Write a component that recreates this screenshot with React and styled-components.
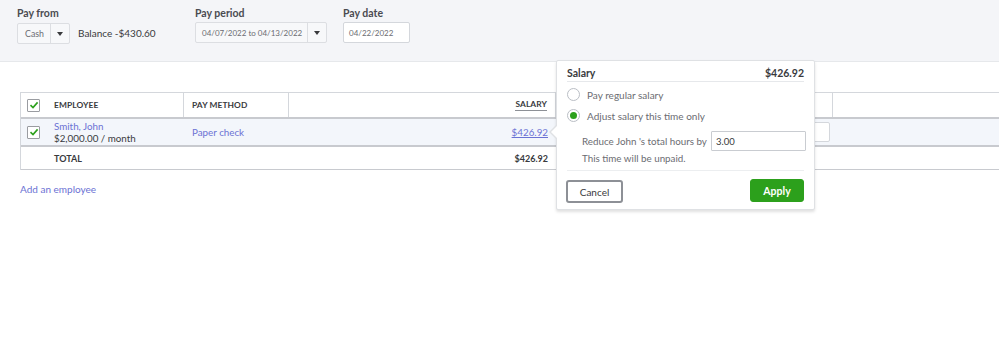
import React from "react";
import styled, { createGlobalStyle } from "styled-components";

const Global = createGlobalStyle`
  html, body { margin: 0; padding: 0; background: #fff; }
  body { font-family: Lato, "Open Sans", Arial, sans-serif; color: #393a3d; }
  * { box-sizing: border-box; }
`;

const LINK = "#6b72d4";
const GREEN = "#2ca01c";
const LINE = "#d4d7dc";

const Page = styled.div`
  position: relative;
  width: 999px;
  height: 342px;
  overflow: hidden;
  white-space: nowrap;
`;

const TopBand = styled.div`
  height: 62px;
  background: #f4f5f8;
  border-bottom: 1px solid #e6e8eb;
  padding: 6px 0 0 17px;
  display: flex;
`;

const Field = styled.div`
  width: ${(p) => p.$width}px;
  display: flex;
  flex-direction: column;
`;

const Label = styled.div`
  font-size: 10.5px;
  font-weight: 700;
  line-height: 14px;
  height: 14px;
  color: #4a4b50;
  margin-bottom: 2px;
`;

const ControlRow = styled.div`
  display: flex;
  align-items: center;
  gap: 8px;
`;

const Select = styled.div`
  width: ${(p) => p.$width}px;
  height: 21px;
  margin-top: ${(p) => p.$offset || 0}px;
  border: 1px solid #dcdee2;
  border-radius: 2px;
  background: #f7f8fa;
  display: flex;
  align-items: stretch;
`;

const SelectText = styled.div`
  flex: 1;
  font-size: ${(p) => p.$fs}px;
  color: #6b6c72;
  display: flex;
  align-items: center;
  padding-left: ${(p) => p.$pad}px;
  border-right: 1px solid #dcdee2;
  overflow: hidden;
`;

const Caret = styled.div`
  width: 18px;
  flex-shrink: 0;
  display: flex;
  align-items: center;
  justify-content: center;
  &::after {
    content: "";
    border-left: 3px solid transparent;
    border-right: 3px solid transparent;
    border-top: 4px solid #393a3d;
  }
`;

const Balance = styled.div`
  font-size: 10px;
  color: #393a3d;
`;

const DateInput = styled.div`
  width: 67px;
  height: 21px;
  background: #fff;
  border: 1px solid #d4d7dc;
  border-radius: 2px;
  font-size: 8px;
  color: #6b6c72;
  display: flex;
  align-items: center;
  padding-left: 5px;
`;

const Table = styled.div`
  margin: 30px 0 0 20px;
  border-left: 1px solid ${LINE};
  border-top: 1px solid ${LINE};
`;

const COLS = "25px 138px 105px 267px 277px 1fr";

const HeadRow = styled.div`
  display: grid;
  grid-template-columns: ${COLS};
  height: 26px;
  border-bottom: 2px solid #c8cacf;
`;

const BodyRow = styled.div`
  display: grid;
  grid-template-columns: ${COLS};
  height: ${(p) => p.$h}px;
  background: ${(p) => (p.$shade ? "#f3f6fb" : "#fff")};
  border-bottom: ${(p) => p.$bw}px solid #c8cacf;
`;

const Cell = styled.div`
  display: flex;
  flex-direction: column;
  justify-content: center;
  align-items: ${(p) => (p.$right ? "flex-end" : "flex-start")};
  padding: ${(p) => (p.$right ? `0 ${p.$pr ?? 8}px 0 0` : "0 0 0 8px")};
  border-right: ${(p) => (p.$div ? `1px solid ${LINE}` : "none")};
`;

const CheckCell = styled.div`
  display: flex;
  align-items: center;
  padding-left: 6px;
`;

const HeadText = styled.span`
  font-size: 8.4px;
  font-weight: 700;
  letter-spacing: 0.1px;
  color: #393a3d;
  padding-bottom: ${(p) => (p.$sort ? 1 : 0)}px;
  border-bottom: ${(p) => (p.$sort ? "1px solid #8d9096" : "none")};
`;

const Box = styled.div`
  width: 13px;
  height: 13px;
  border: 1px solid #9a9ca1;
  border-radius: 1px;
  background: #fff;
  display: flex;
  align-items: center;
  justify-content: center;
`;

const LinkText = styled.span`
  font-size: 9.8px;
  color: ${LINK};
  line-height: 12px;
  text-decoration: ${(p) => (p.$u ? "underline" : "none")};
`;

const Sub = styled.span`
  font-size: 9.8px;
  color: #393a3d;
  line-height: 12px;
`;

const Bold = styled.span`
  font-size: 9px;
  font-weight: 700;
  color: #393a3d;
`;

const SmallInput = styled.div`
  width: 100px;
  height: 20px;
  background: #fff;
  border: 1px solid ${LINE};
  border-radius: 2px;
`;

const AddLink = styled.div`
  margin: 12px 0 0 20px;
  font-size: 10px;
  line-height: 14px;
  color: ${LINK};
`;

const Popover = styled.div`
  position: absolute;
  left: 556px;
  top: 60px;
  width: 259px;
  height: 150px;
  background: #fff;
  border: 1px solid #dfe1e4;
  border-radius: 2px;
  box-shadow: 0 2px 3px rgba(0, 0, 0, 0.12);
  padding: 0 10px;
  &::before {
    content: "";
    position: absolute;
    left: -8px;
    top: 63px;
    border-top: 8px solid transparent;
    border-bottom: 8px solid transparent;
    border-right: 8px solid #dfe1e4;
  }
  &::after {
    content: "";
    position: absolute;
    left: -6px;
    top: 64px;
    border-top: 7px solid transparent;
    border-bottom: 7px solid transparent;
    border-right: 7px solid #fff;
  }
`;

const PopHead = styled.div`
  height: 21px;
  padding-top: 5px;
  display: flex;
  justify-content: space-between;
  font-size: 10.5px;
  font-weight: 700;
  line-height: 14px;
  color: #393a3d;
  border-bottom: 1px solid #e6e8eb;
`;

const Radios = styled.div`
  padding-top: 2px;
`;

const RadioRow = styled.div`
  height: 21px;
  display: flex;
  align-items: center;
  gap: 7px;
  font-size: 10px;
  color: #6b6c72;
`;

const Radio = styled.div`
  width: 13px;
  height: 13px;
  border-radius: 50%;
  border: 1px solid #babec5;
  background: #fff;
  display: flex;
  align-items: center;
  justify-content: center;
  &::after {
    content: "";
    width: 7px;
    height: 7px;
    border-radius: 50%;
    background: ${(p) => (p.$on ? GREEN : "transparent")};
  }
`;

const Indent = styled.div`
  padding-left: 15px;
  font-size: 9.8px;
  color: #6b6c72;
`;

const ReduceRow = styled.div`
  margin-top: 5px;
  display: flex;
  align-items: center;
  gap: 4px;
`;

const HoursInput = styled.div`
  width: 95px;
  height: 20px;
  flex-shrink: 0;
  border: 1px solid #c9ccd1;
  border-radius: 1px;
  font-size: 9.5px;
  color: #393a3d;
  display: flex;
  align-items: center;
  padding-left: 4px;
`;

const Note = styled.div`
  line-height: 14px;
`;

const Divider = styled.div`
  margin-top: 5px;
  border-top: 1px solid #eceef0;
`;

const Buttons = styled.div`
  margin-top: 8px;
  display: flex;
  justify-content: space-between;
  align-items: flex-start;
`;

const Button = styled.button`
  font-family: inherit;
  height: 23px;
  width: ${(p) => p.$w}px;
  margin-top: ${(p) => (p.$primary ? 0 : 1)}px;
  margin-left: ${(p) => (p.$primary ? 0 : -1)}px;
  border-radius: 3px;
  font-size: ${(p) => (p.$primary ? "10.5px" : "10px")};
  font-weight: ${(p) => (p.$primary ? 700 : 400)};
  color: ${(p) => (p.$primary ? "#fff" : "#393a3d")};
  background: ${(p) => (p.$primary ? GREEN : "#fff")};
  border: ${(p) => (p.$primary ? `1px solid ${GREEN}` : "2px solid #8d9096")};
  padding: 0;
`;

const Check = () => (
  <svg width="10" height="10" viewBox="0 0 10 10">
    <path d="M1.5 5.2 L4 7.6 L8.6 2.4" fill="none" stroke="#2ca01c" strokeWidth="1.6" />
  </svg>
);

export default function App() {
  return (
    <Page>
      <Global />
      <TopBand>
        <Field $width={178}>
          <Label>Pay from</Label>
          <ControlRow>
            <Select $width={53} $offset={1}>
              <SelectText $pad={7} $fs={8.8}>Cash</SelectText>
              <Caret />
            </Select>
            <Balance>Balance -$430.60</Balance>
          </ControlRow>
        </Field>
        <Field $width={148}>
          <Label>Pay period</Label>
          <Select $width={132}>
            <SelectText $pad={6} $fs={8}>04/07/2022 to 04/13/2022</SelectText>
            <Caret />
          </Select>
        </Field>
        <Field $width={80}>
          <Label>Pay date</Label>
          <DateInput>04/22/2022</DateInput>
        </Field>
      </TopBand>

      <Table>
        <HeadRow>
          <CheckCell>
            <Box><Check /></Box>
          </CheckCell>
          <Cell $div><HeadText>EMPLOYEE</HeadText></Cell>
          <Cell $div><HeadText>PAY METHOD</HeadText></Cell>
          <Cell $right $div><HeadText $sort>SALARY</HeadText></Cell>
          <Cell $div />
          <Cell />
        </HeadRow>
        <BodyRow $h={28} $shade $bw={2}>
          <CheckCell>
            <Box><Check /></Box>
          </CheckCell>
          <Cell>
            <LinkText>Smith, John</LinkText>
            <Sub>$2,000.00 / month</Sub>
          </Cell>
          <Cell><LinkText>Paper check</LinkText></Cell>
          <Cell $right><LinkText $u>$426.92</LinkText></Cell>
          <Cell $right $pr={3}>
            <SmallInput />
          </Cell>
          <Cell />
        </BodyRow>
        <BodyRow $h={23} $bw={1}>
          <CheckCell />
          <Cell><Bold>TOTAL</Bold></Cell>
          <Cell />
          <Cell $right><Bold>$426.92</Bold></Cell>
          <Cell />
          <Cell />
        </BodyRow>
      </Table>
      <AddLink>Add an employee</AddLink>

      <Popover>
        <PopHead>
          <span>Salary</span>
          <span>$426.92</span>
        </PopHead>
        <Radios>
          <RadioRow>
            <Radio />
            <span>Pay regular salary</span>
          </RadioRow>
          <RadioRow>
            <Radio $on />
            <span>Adjust salary this time only</span>
          </RadioRow>
        </Radios>
        <Indent>
          <ReduceRow>
            <span>Reduce John 's total hours by</span>
            <HoursInput>3.00</HoursInput>
          </ReduceRow>
          <Note>This time will be unpaid.</Note>
        </Indent>
        <Divider />
        <Buttons>
          <Button $w={57}>Cancel</Button>
          <Button $primary $w={54}>Apply</Button>
        </Buttons>
      </Popover>
    </Page>
  );
}
